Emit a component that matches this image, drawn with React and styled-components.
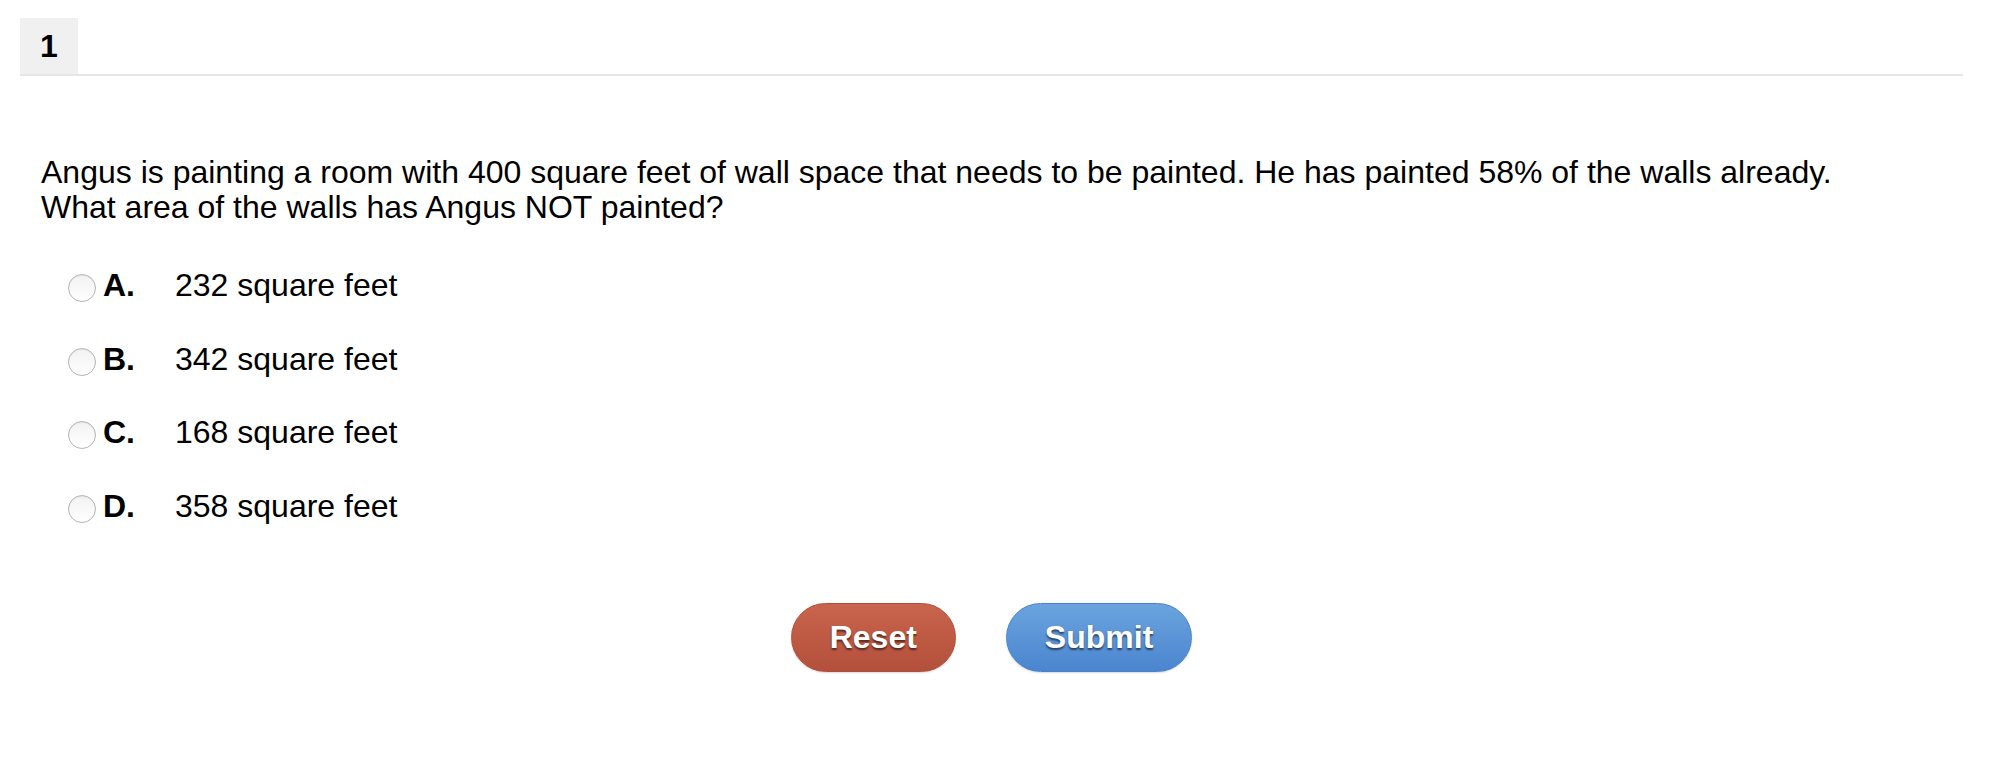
import styled, { createGlobalStyle } from "styled-components";
import { useState } from "react";

const GlobalStyle = createGlobalStyle`
  body {
    margin: 0;
    background: #fff;
    font-family: "Liberation Sans", Arial, sans-serif;
    color: #000;
  }
`;

const Page = styled.div`
  padding: 18px 27px 40px 20px;
`;

const TabBar = styled.div`
  display: flex;
  border-bottom: 2px solid #e6e6e6;
`;

const Tab = styled.div`
  width: 58px;
  height: 56px;
  display: flex;
  align-items: center;
  justify-content: center;
  background: #f0f0f0;
  font-size: 32px;
  font-weight: 700;
`;

const Question = styled.p`
  margin: 79px 0 0 21px;
  font-size: 32px;
  line-height: 35px;
`;

const Options = styled.div`
  display: flex;
  flex-direction: column;
  gap: 33.5px;
  margin: 40px 0 0 48px;
`;

const Option = styled.label`
  display: flex;
  align-items: center;
  height: 40px;
  font-size: 32px;
  line-height: 40px;
  cursor: pointer;
`;

const Radio = styled.input`
  appearance: none;
  width: 28px;
  height: 28px;
  margin: 6px 7px 0 0;
  border-radius: 50%;
  border: 1px solid #b4b4b4;
  background: linear-gradient(#f2f2f2, #ffffff);
  box-shadow: inset 0 1px 1px rgba(0, 0, 0, 0.06);
  flex-shrink: 0;
  &:checked {
    background: radial-gradient(circle, #3b79c9 0 6px, #fff 7px);
  }
`;

const Letter = styled.span`
  width: 72px;
  font-weight: 700;
`;

const Buttons = styled.div`
  display: flex;
  justify-content: center;
  gap: 50px;
  margin-top: 77px;
`;

const Button = styled.button`
  height: 69px;
  padding: 0 38px;
  border-radius: 35px;
  border: 1px solid ${(p) => p.$edge};
  background: linear-gradient(${(p) => p.$top}, ${(p) => p.$bottom});
  color: #fff;
  font-family: "Liberation Sans", Arial, sans-serif;
  font-size: 32px;
  font-weight: 700;
  text-shadow: 0 2px 2px rgba(0, 0, 0, 0.55);
  box-shadow: 0 1px 2px rgba(0, 0, 0, 0.15);
  cursor: pointer;
`;

const options = [
  { key: "A", text: "232 square feet" },
  { key: "B", text: "342 square feet" },
  { key: "C", text: "168 square feet" },
  { key: "D", text: "358 square feet" },
];

export default function App() {
  const [choice, setChoice] = useState(null);

  return (
    <Page>
      <GlobalStyle />
      <TabBar>
        <Tab>1</Tab>
      </TabBar>
      <Question>
        Angus is painting a room with 400 square feet of wall space that needs to be painted. He has painted 58% of the walls already.
        <br />
        What area of the walls has Angus NOT painted?
      </Question>
      <Options>
        {options.map((o) => (
          <Option key={o.key}>
            <Radio
              type="radio"
              name="answer"
              checked={choice === o.key}
              onChange={() => setChoice(o.key)}
            />
            <Letter>{o.key}.</Letter>
            {o.text}
          </Option>
        ))}
      </Options>
      <Buttons>
        <Button $top="#c9644d" $bottom="#b3503b" $edge="#b04e3a" onClick={() => setChoice(null)}>
          Reset
        </Button>
        <Button $top="#6ba4de" $bottom="#4a85cf" $edge="#4a82c9">
          Submit
        </Button>
      </Buttons>
    </Page>
  );
}
